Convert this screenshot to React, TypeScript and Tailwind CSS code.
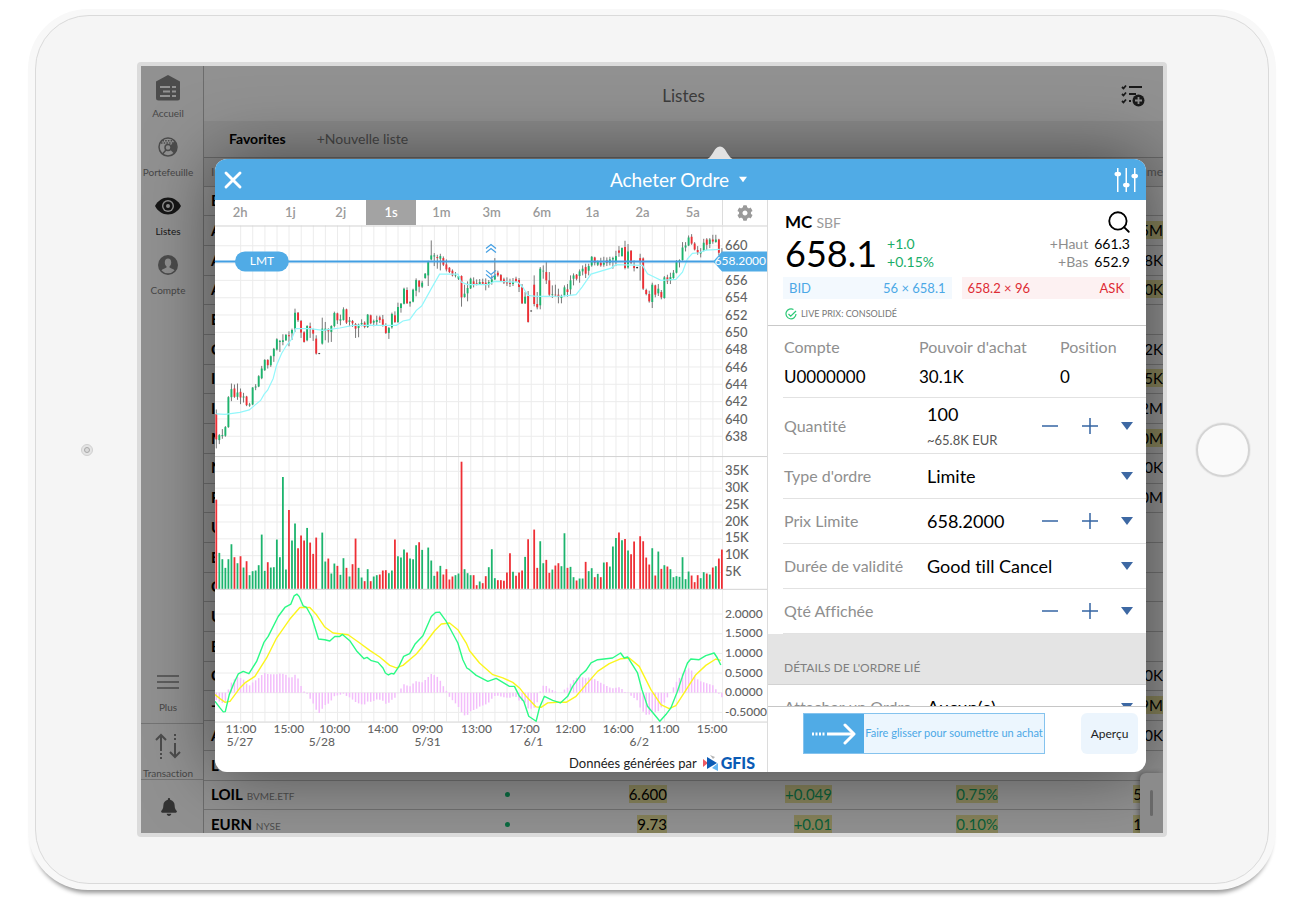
import { Search, X } from "lucide-react"
import { FaBell, FaCog } from "react-icons/fa"

const navItems = [
  { label: "Accueil", icon: <HomeIcon /> },
  { label: "Portefeuille", icon: <PortfolioIcon /> },
  { label: "Listes", icon: <EyeIcon />, active: true },
  { label: "Compte", icon: <AccountIcon /> },
]

const rows = [
  { symbol: "B" },
  { symbol: "A", volume: "1.5M", marked: true },
  { symbol: "A", volume: "8K" },
  { symbol: "A", volume: "10K", marked: true },
  { symbol: "E" },
  { symbol: "C", volume: "2K" },
  { symbol: "I", volume: "5K", marked: true },
  { symbol: "I", volume: "2M" },
  { symbol: "M", volume: "10M", marked: true },
  { symbol: "N", volume: "10K" },
  { symbol: "F", volume: "10M" },
  { symbol: "U" },
  { symbol: "E" },
  { symbol: "C" },
  { symbol: "U" },
  { symbol: "B" },
  { symbol: "C", volume: "10K" },
  { symbol: "-", volume: "9M", marked: true },
  { symbol: "A", volume: "10K" },
  { symbol: "L" },
  { symbol: "LOIL", exchange: "BVME.ETF", price: "6.600", change: "+0.049", pct: "0.75%", volume: "53.5", marked: true },
  { symbol: "EURN", exchange: "NYSE", price: "9.73", change: "+0.01", pct: "0.10%", volume: "12.1", marked: true },
]

const ranges = ["2h", "1j", "2j", "1s", "1m", "3m", "6m", "1a", "2a", "5a"]

// high, body top, body bottom, low (thirds of a pixel below the top of the plot)
const candles = `553,567,643,670 627,630,645,657 612,630,633,641 603,606,632,635 513,516,606,608 475,492,516,528 478,490,515,518
475,502,515,524 490,500,517,537 503,514,517,532 512,514,540,543 533,538,541,545 486,487,538,540 477,484,487,495 450,453,484,486
422,430,459,462 402,404,435,437 402,404,420,430 391,393,420,425 368,371,393,410 339,342,373,376 344,347,350,380 327,345,350,360
326,329,345,347 318,330,333,363 310,314,324,344 250,262,310,320 260,262,285,290 284,287,322,338 318,321,350,352 300,302,345,348
292,303,310,338 310,312,325,347 330,340,385,388 383,384,386,387 277,310,355,358 290,310,316,345 309,311,318,352 300,302,320,350
259,263,302,306 262,264,285,296 268,282,286,300 246,252,284,286 250,252,292,296 275,285,290,303 284,287,294,305 293,296,310,338
295,298,308,336 282,293,297,303 288,292,305,309 266,268,305,308 268,270,294,297 283,287,292,303 271,284,290,300 271,276,284,293
269,282,300,304 294,302,323,326 305,308,323,341 262,266,306,310 258,270,290,293 232,245,290,293 233,235,248,262 187,190,235,237
186,194,234,236 227,230,234,244 190,193,229,231 159,164,196,213 164,166,184,201 166,172,184,188 143,145,158,160 106,110,150,182
45,90,102,105 83,90,93,122 88,95,98,130 85,92,100,135 93,98,118,122 102,117,132,138 125,127,140,143 132,136,150,153
140,150,152,156 148,152,160,164 150,152,216,244 178,205,215,217 168,188,204,228 157,160,189,191 156,168,176,186 162,173,175,180
161,170,176,178 160,170,175,178 159,172,176,195 164,170,177,187 150,162,172,178 98,150,162,164 136,142,150,154 146,149,166,168
157,162,172,176 156,170,174,182 160,172,176,185 158,170,176,182 154,160,168,170 158,164,185,200 176,186,234,236 200,214,234,236
197,210,290,292 255,256,258,259 150,178,236,243 200,236,246,252 125,130,240,252 120,136,138,160 110,140,165,176 140,165,208,212
180,206,208,218 178,208,210,215 190,208,215,234 208,213,218,234 180,186,210,213 176,192,200,214 150,165,192,208 144,150,160,180
146,148,160,165 132,138,152,172 120,130,138,150 115,125,145,158 115,122,136,150 92,94,120,124 94,96,112,120 105,108,118,122
97,112,120,124 94,112,118,124 96,105,112,122 94,102,112,120 94,98,102,130 76,92,110,122 62,75,82,94 66,68,92,94 46,65,128,132
56,78,126,130 74,76,112,116 105,122,128,138 124,125,128,130 85,98,110,166 96,99,190,194 190,194,206,210 196,206,228,232
172,178,230,248 178,180,208,216 176,190,204,212 194,200,216,222 152,156,218,220 148,156,168,176 142,155,165,176 134,142,158,160
104,110,142,144 102,104,106,126 50,66,104,106 50,60,66,78 30,36,60,62 26,34,54,58 50,54,72,75 62,74,82,88 68,80,84,96
40,52,75,78 38,42,58,74 38,42,56,68 28,42,48,55 28,42,50,52 40,42,82,90 68,82,84,100`
  .split(/\s+/)
  .map((c) => c.split(",").map(Number))

// r = down, g = up, k = unchanged, followed by the top of the volume bar
const volumes = `r134 g294 g313 g339 g313 g268 r307 g325 r304 g338 r319 g361 g349 g347 g331 g239 g348 r322 g338 g337 g254 g307
g66 g344 r165 g257 g206 r280 r242 r257 g219 r263 r297 r248 k402 g233 g320 r311 g356 g326 r333 g360 g310 r339 g365 r328 r251 g339
g368 r379 g343 r379 g365 g361 r359 r347 r346 g355 g347 r254 g304 g308 g284 r293 g311 g313 g271 r262 g285 g402 g278 g317 g363
r350 g333 r359 r343 r374 r365 g361 g356 r20 g343 g355 g361 r361 r391 g380 r385 r364 g337 g283 g370 r376 r376 r378 r353 r295
g351 r363 r353 r347 g306 r253 k402 r224 r339 g259 g325 r315 r354 g344 r332 r325 g334 g235 r339 g336 g367 r377 g371 g371 r321
g349 g340 r367 g357 r367 g323 r322 g335 g275 g249 r233 g256 r252 g287 r298 r260 k402 r244 r259 r308 r329 g280 r362 g290 r342
g331 r335 g343 g367 g364 g366 g307 g373 g350 r362 r382 r361 g370 g352 r356 g359 r338 g334 r311 r284`
  .split(/\s+/)
  .map((v) => ({ kind: v[0], top: Number(v.slice(1)) }))

type Point = [number, number]

const place = (points: Point[], x: number, y: number): Point[] => points.map(([px, py]) => [x + px / 3, y + py / 3])

const average = [
  ...place([[19, 566], [45, 568], [90, 562], [118, 554], [135, 540], [152, 526], [163, 507], [173, 495], [190, 460], [200, 420], [215, 385], [230, 360], [245, 342], [258, 310], [300, 310], [340, 315], [390, 308], [430, 300], [560, 300], [580, 287], [600, 283], [620, 255], [636, 242], [665, 190], [690, 146], [745, 146], [755, 170], [775, 178]], 210, 225),
  ...place([[0, 178], [25, 178], [45, 168], [115, 170], [130, 185], [145, 210], [170, 213], [250, 212], [290, 208], [308, 185], [335, 146], [395, 128], [410, 118], [490, 120], [505, 145], [525, 155], [545, 165], [590, 162], [610, 140], [625, 100], [640, 84], [660, 82], [680, 74], [722, 72]], 480, 225),
]

const macd = [
  ...place([[255, 365], [270, 385], [280, 397], [286, 396], [298, 345], [312, 310], [325, 283], [340, 275], [357, 282], [380, 245], [402, 188], [415, 170], [445, 110], [465, 83], [483, 73], [493, 48], [501, 43], [508, 50], [520, 78], [530, 83], [545, 110], [566, 178], [585, 180], [600, 184], [615, 170], [630, 170], [638, 164], [660, 183], [680, 213], [703, 237], [712, 233], [725, 243], [745, 248], [760, 265], [767, 280], [776, 286], [785, 281], [793, 283], [807, 262], [822, 230], [840, 222], [857, 192], [880, 168], [905, 110], [918, 98], [930, 97], [950, 125], [985, 190], [1000, 240], [1012, 265]], 130, 580),
  ...place([[0, 270], [20, 287], [55, 305], [80, 296], [120, 320], [135, 320], [150, 350], [163, 365], [178, 410], [200, 425], [210, 385], [225, 350], [250, 362], [273, 370], [295, 350], [310, 320], [335, 285], [350, 272], [365, 250], [385, 240], [430, 235], [454, 220], [465, 235], [475, 232], [505, 280], [518, 330], [535, 380], [572, 425], [590, 405], [605, 385], [625, 335], [640, 290], [655, 250], [665, 238], [690, 240], [710, 228], [735, 220], [745, 235], [755, 256]], 470, 580),
]

const signal = [
  ...place([[255, 345], [270, 357], [285, 368], [300, 365], [330, 325], [345, 310], [375, 290], [410, 235], [440, 175], [480, 118], [510, 83], [540, 83], [560, 105], [585, 142], [610, 160], [655, 165], [690, 190], [720, 212], [750, 232], [780, 257], [800, 265], [820, 257], [860, 223], [885, 193], [915, 153], [935, 133], [960, 130], [985, 150], [1010, 190]], 130, 580),
  ...place([[0, 213], [30, 250], [70, 285], [100, 295], [130, 308], [150, 325], [170, 350], [200, 382], [215, 383], [235, 370], [265, 368], [290, 368], [320, 350], [350, 315], [385, 275], [420, 252], [455, 237], [480, 235], [510, 260], [545, 330], [575, 375], [600, 387], [620, 378], [645, 340], [680, 285], [710, 257], [740, 238], [755, 242]], 470, 580),
]

const times: [string, number][] = [
  ["11:00", 241], ["15:00", 289], ["10:00", 335], ["14:00", 383], ["09:00", 428], ["13:00", 477],
  ["17:00", 525], ["12:00", 571], ["16:00", 619], ["11:00", 665], ["15:00", 713],
]

const dates: [string, number][] = [["5/27", 240], ["5/28", 322], ["5/31", 428], ["6/1", 534], ["6/2", 640]]

const palette: Record<string, string> = { r: "#ee2f35", g: "#1cb46d", k: "#222222" }

const barX = (i: number) => 216.3 + i * 3.033

const valueAt = (points: Point[], x: number) => {
  const i = points.findIndex((p) => p[0] >= x)
  if (i <= 0) return points[i === 0 ? 0 : points.length - 1][1]
  const [x0, y0] = points[i - 1]
  const [x1, y1] = points[i]
  return y0 + ((x - x0) / (x1 - x0 || 1)) * (y1 - y0)
}

const toPath = (points: Point[]) => points.map((p) => p.map((n) => n.toFixed(1)).join(",")).join(" ")

function HomeIcon() {
  return (
    <svg viewBox="0 0 24 26" className="h-[26px] w-6">
      <path d="M12 0 24 6.500V23a2.500 2.500 0 0 1-2.500 2.500h-19A2.500 2.500 0 0 1 0 23V6.500Z" fill="#4c4c4c" />
      <path d="M4 12h10M7 16.500h7M4 21h10M16 12h4M16 16.500h4M16 21h4" stroke="#929292" strokeWidth="2" />
    </svg>
  )
}

function PortfolioIcon() {
  return (
    <svg viewBox="0 0 20 20" className="size-5" fill="none">
      <circle cx="10" cy="10" r="9" stroke="#4c4c4c" strokeWidth="1.500" />
      <path d="m12.500 8.500 4-4.500a9 9 0 0 1-.5 12.500L12 12.500Z" fill="#4c4c4c" />
      <circle cx="10" cy="10.500" r="3" fill="#8e8e8e" stroke="#4c4c4c" strokeWidth="1.500" />
      <path d="M4.500 3.800h11M3 6h12" stroke="#4c4c4c" strokeWidth="1.500" strokeDasharray="1.500 1.200" />
      <path d="m8 13-3.500 4" stroke="#4c4c4c" strokeWidth="1.500" />
    </svg>
  )
}

function EyeIcon() {
  return (
    <svg viewBox="0 0 26 18" className="h-[18px] w-[26px]">
      <path d="M0 9C3 3.500 7.500.5 13 .5S23 3.500 26 9c-3 5.500-7.500 8.500-13 8.500S3 14.500 0 9Z" fill="#161616" />
      <circle cx="13" cy="9" r="6" fill="#8e8e8e" />
      <circle cx="13" cy="9" r="4.600" fill="#161616" />
      <circle cx="13" cy="9" r="2" fill="#8e8e8e" />
    </svg>
  )
}

function AccountIcon() {
  return (
    <svg viewBox="0 0 20 20" className="size-5">
      <circle cx="10" cy="10" r="10" fill="#4c4c4c" />
      <ellipse cx="10" cy="7.500" rx="3.200" ry="4" fill="#8e8e8e" />
      <path d="M8.500 10h3v2.500c1 1 4 1 5 3a9 9 0 0 1-13 0c1-2 4-2 5-3Z" fill="#8e8e8e" />
    </svg>
  )
}

function Caret({ className }: { className: string }) {
  return (
    <svg viewBox="0 0 12 8" className={className} fill="currentColor" aria-hidden="true">
      <path d="M0 0h12L6 8Z" />
    </svg>
  )
}

function Sidebar() {
  return (
    <nav className="flex w-[63px] shrink-0 flex-col border-r border-[#6c6c6c] pt-2 text-[10px] text-[#474747]">
      <div className="flex flex-col gap-3">
        {navItems.map((item) => (
          <a key={item.label} href="#" className="flex w-[54px] flex-col items-center gap-[3px]">
            <span className="flex h-7 items-center">{item.icon}</span>
            <span className={item.active ? "leading-4 text-[#161616]" : "leading-4"}>{item.label}</span>
          </a>
        ))}
      </div>
      <a href="#" className="mt-auto flex w-[54px] flex-col items-center gap-[3px] pb-2">
        <span className="flex h-7 items-center">
          <svg viewBox="0 0 22 14" className="h-3.5 w-[22px]" stroke="#4c4c4c" strokeWidth="1.500">
            <path d="M0 1h22M0 7h22M0 13h22" />
          </svg>
        </span>
        <span className="leading-4">Plus</span>
      </a>
      <div className="h-14 border-t border-[#747474] pt-2">
        <a href="#" className="flex h-full w-[54px] flex-col items-center justify-between">
          <svg viewBox="0 0 26 26" className="h-7 w-[26px]" stroke="#4c4c4c" strokeWidth="2" fill="none">
            <path d="M6 18V2M1 7l5-5 5 5M20 10v14m-5-5 5 5 5-5" />
            <path d="M6 20v6M20 1v7" strokeDasharray="2 2" />
          </svg>
          <span className="leading-3">Transaction</span>
        </a>
      </div>
      <a href="#" aria-label="Notifications" className="flex h-[54px] items-center justify-center border-t border-[#747474] pr-1.5 text-[#333]">
        <FaBell className="size-[18px]" />
      </a>
    </nav>
  )
}

function Watchlist() {
  return (
    <section className="flex min-w-0 flex-1 flex-col">
      <header className="flex h-[55px] shrink-0 items-center pt-1 pr-[18px]">
        <h1 className="flex-1 pl-[18px] text-center text-[17px] text-[#3c3c3c]">Listes</h1>
        <button aria-label="Ajouter" className="-ml-6">
          <svg viewBox="0 0 24 24" className="size-6" fill="none" stroke="#1a1a1a" strokeWidth="1.800">
            <path d="M8 3h13M8 10h7M8 17h2M1 3l1.500 1.500L5 1.500M1 10l1.500 1.500L5 8.500M1 17l1.500 1.500L5 15.500" />
            <circle cx="17.500" cy="16.500" r="6" fill="#1a1a1a" stroke="none" />
            <path d="M17.500 13v7M14 16.500h7" stroke="#8e8e8e" />
          </svg>
        </button>
      </header>
      <div className="flex h-[37px] shrink-0 items-center gap-[31px] border-b border-[#686868] bg-black/5 px-[25px] text-sm text-[#464646]">
        <button className="font-bold text-black">Favorites</button>
        <button>+Nouvelle liste</button>
      </div>
      <div className="min-h-0 flex-1 overflow-hidden">
        <table className="h-[682px] w-full table-fixed border-collapse text-sm">
          <thead>
            <tr className="h-7 border-b border-[#6f6f6f] bg-[#868686] text-xs text-[#4f4f4f]">
              <th className="pl-[7px] text-left font-normal">Instrument</th>
              <th className="w-3.5" />
              <th className="w-[153px]" />
              <th className="w-[165px]" />
              <th className="w-[166px]" />
              <th className="w-[165px] text-right font-normal">Volume</th>
            </tr>
          </thead>
          <tbody>
            {rows.map((row, i) => (
              <tr key={i} className="border-b border-[#727272] text-[15px]">
                <td className="pl-[7px] whitespace-nowrap">
                  <span className="font-bold text-black">{row.symbol}</span>{" "}
                  <span className="text-[10px] text-[#4e4e4e]">{row.exchange}</span>
                </td>
                <td>{row.price && <span className="mx-auto block size-[5px] rounded-full bg-[#0a6b41]" />}</td>
                <td className="text-right text-black">
                  <span className={row.price && "bg-[#86825a]"}>{row.price}</span>
                </td>
                <td className="text-right text-[#0b5f3a]">
                  <span className={row.price && "bg-[#86825a]"}>{row.change}</span>
                </td>
                <td className="text-right text-[#0b5f3a]">
                  <span className={row.price && "bg-[#86825a]"}>{row.pct}</span>
                </td>
                <td className="text-right text-black">
                  <span className={row.marked ? "bg-[#86825a]" : ""}>{row.volume}</span>
                </td>
              </tr>
            ))}
          </tbody>
        </table>
      </div>
    </section>
  )
}

function Chart() {
  return (
    <svg viewBox="215 225 553 525" className="min-h-0 w-full flex-1" fill="none" role="img" aria-label="MC">
      {/* grid */}
      <g stroke="#ececec">
        {Array.from({ length: 40 }, (_, i) => (
          <path key={i} d={`M${(240.7 + i * 12.13).toFixed(1)} 225V722`} />
        ))}
        {Array.from({ length: 12 }, (_, i) => (
          <path key={i} d={`M215 ${(245.3 + i * 17.35).toFixed(1)}H723`} />
        ))}
        {Array.from({ length: 7 }, (_, i) => (
          <path key={i} d={`M215 ${(471.3 + i * 16.9).toFixed(1)}H723`} />
        ))}
        {Array.from({ length: 6 }, (_, i) => (
          <path key={i} d={`M215 ${(614.3 + i * 19.7).toFixed(1)}H723`} />
        ))}
        <path d="M723.500 225V722" />
      </g>
      <path d="M215 225.500H768M215 456.500H768M215 589.500H768M215 722.500H768" stroke="#d2d2d2" />

      {/* candles */}
      {candles.map(([high, top, bottom, low], i) => {
        const color = palette[volumes[i].kind]
        return (
          <g key={i}>
            <path d={`M${barX(i)} ${225 + high / 3}V${225 + low / 3}`} stroke="#777777" />
            <path d={`M${barX(i)} ${225 + top / 3}V${225 + bottom / 3}`} stroke={color} strokeWidth="1.900" />
          </g>
        )
      })}
      <polyline points={toPath(average)} stroke="#93f7fb" strokeWidth="1.200" />

      {/* volume */}
      {volumes.map((v, i) => (
        <path key={i} d={`M${barX(i)} 589V${455 + v.top / 3}`} stroke={palette[v.kind]} strokeWidth="1.800" />
      ))}

      {/* MACD */}
      {volumes.map((_, i) => (
        <path
          key={i}
          d={`M${barX(i)} 693V${693 - (valueAt(signal, barX(i)) - valueAt(macd, barX(i)))}`}
          stroke="#f3bdfb"
          strokeWidth="1.500"
        />
      ))}
      <polyline points={toPath(signal)} stroke="#fbf51d" strokeWidth="1.400" strokeLinejoin="round" />
      <polyline points={toPath(macd)} stroke="#2bfa86" strokeWidth="1.400" strokeLinejoin="round" />

      {/* limit order line */}
      <path d="M215 261H716" stroke="#439fe3" strokeWidth="2" />
      <rect x="235" y="251" width="54" height="20" rx="10" fill="#50abe6" />
      <text x="262" y="265" fontSize="12" fill="#ffffff" textAnchor="middle">LMT</text>
      <path d="m714 261 9-10h45v20h-45Z" fill="#50abe6" />
      <path d="m486.500 248 5-4 5 4m-10 4 5-4 5 4m-10 18 5 4 5-4m-10 4 5 4 5-4" stroke="#439fe3" strokeWidth="1.200" />

      {/* axes */}
      <g fontSize="13" fontWeight="500" fill="#636363">
        {[660, 658, 656, 654, 652, 650, 648, 646, 644, 642, 640, 638].map((p, i) =>
          p === 658 ? null : (
            <text key={p} x="726" y={250 + i * 17.35}>{p}</text>
          ),
        )}
        {["35K", "30K", "25K", "20K", "15K", "10K", "5K"].map((p, i) => (
          <text key={p} x="726" y={475 + i * 16.9}>{p}</text>
        ))}
        {["2.0000", "1.5000", "1.0000", "0.5000", "0.0000", "-0.5000"].map((p, i) => (
          <text key={p} x="726" y={618 + i * 19.7} fontSize="12">{p}</text>
        ))}
        {times.map(([label, x]) => (
          <text key={x} x={x} y="733" fontSize="12" textAnchor="middle">{label}</text>
        ))}
        {dates.map(([label, x]) => (
          <text key={x} x={x} y="746" fontSize="12" textAnchor="middle">{label}</text>
        ))}
      </g>
      <text x="767" y="265" fontSize="12" fill="#ffffff" textAnchor="end">658.2000</text>
    </svg>
  )
}

function ChartPanel() {
  return (
    <section className="flex min-w-0 flex-1 flex-col border-r border-[#dcdcdc]">
      <div className="flex h-[25px] shrink-0 text-[13px] font-semibold text-[#9a9a9a]">
        <div className="flex flex-1 pr-1">
          {ranges.map((range) => (
            <button key={range} className={range === "1s" ? "flex-1 bg-[#a3a3a3] text-white" : "flex-1"}>
              {range}
            </button>
          ))}
        </div>
        <button aria-label="Paramètres" className="flex w-[45px] items-center justify-center border-l border-[#dcdcdc]">
          <FaCog className="size-4" />
        </button>
      </div>
      <Chart />
      <footer className="flex h-[22px] shrink-0 items-center justify-end gap-1.5 pt-1 pr-3">
        <span className="text-[13px] leading-4 text-[#222]">Données générées par</span>
        <span className="flex items-center gap-0.5 text-base leading-4 font-black text-[#0b5bb5]">
          <svg viewBox="0 0 16 16" className="size-4">
            <path d="M0 4v8l5-4Z" fill="#ec5a63" />
            <path d="m7 0 5 2-2 2Z" fill="#b5b5b5" />
            <path d="M4 2v12l10-6Z" fill="#0b5bb5" />
            <path d="m9 13 6-5v8Z" fill="#64b6f3" />
          </svg>
          GFIS
        </span>
      </footer>
    </section>
  )
}

function Quote() {
  return (
    <div className="h-[126px] shrink-0 border-b border-[#c9c9c9] pt-[9px] pr-4 pl-[17px]">
      <div className="flex items-center justify-between">
        <h2 className="text-[17px] font-bold text-black">
          MC <span className="text-sm font-normal text-[#9b9b9b]">SBF</span>
        </h2>
        <button aria-label="Rechercher" className="-mr-0.5">
          <Search className="size-[26px] text-black" strokeWidth={1.7} />
        </button>
      </div>
      <div className="flex items-center gap-2.5 text-sm leading-[18px]">
        <span className="text-[36px] leading-8 text-black">658.1</span>
        <span className="text-[#19ad68]">
          +1.0
          <br />
          +0.15%
        </span>
        <dl className="ml-auto grid grid-cols-[auto_auto] gap-x-1.5 text-right">
          <dt className="text-[#8d8d8d]">+Haut</dt>
          <dd className="text-black">661.3</dd>
          <dt className="text-[#8d8d8d]">+Bas</dt>
          <dd className="text-black">652.9</dd>
        </dl>
      </div>
      <div className="mt-1.5 -ml-0.5 flex gap-2.5 text-[13px] leading-[22px]">
        <div className="flex flex-1 justify-between bg-[#f3f9fe] px-1.5 text-[#4ba8e6]">
          <span>BID</span>
          <span>56 × 658.1</span>
        </div>
        <div className="flex flex-1 justify-between bg-[#fdf1f2] px-1.5 text-[#dd2c35]">
          <span>658.2 × 96</span>
          <span>ASK</span>
        </div>
      </div>
      <p className="mt-1.5 flex items-center gap-1 text-[9px] leading-[18px] text-[#777]">
        <svg viewBox="0 0 12 12" className="size-3" fill="none" stroke="#2dc877" strokeWidth="1.200">
          <path d="M8.500 1.500A5 5 0 1 0 11 6M3.500 6l2.200 2.200L11 3" />
        </svg>
        LIVE PRIX: CONSOLIDÉ
      </p>
    </div>
  )
}

function Steppers({ label }: { label: string }) {
  return (
    <>
      <button aria-label={`${label} moins`} className="w-4">
        <svg viewBox="0 0 16 16" className="size-4" stroke="#3464a3" strokeWidth="1.500">
          <path d="M0 8h16" />
        </svg>
      </button>
      <button aria-label={`${label} plus`} className="ml-6 w-4">
        <svg viewBox="0 0 16 16" className="size-4" stroke="#3464a3" strokeWidth="1.500">
          <path d="M0 8h16M8 0v16" />
        </svg>
      </button>
      <button aria-label={`${label} options`} className="ml-[23px]">
        <Caret className="h-2 w-3 text-[#3d68a3]" />
      </button>
    </>
  )
}

function NumberRow({ id, label, value, note }: { id: string; label: string; value: string; note?: string }) {
  return (
    <div className={note ? "flex h-14 items-center border-b border-[#e2e2e2] pr-[13px]" : "flex h-[45px] items-center border-b border-[#e2e2e2] pr-[13px]"}>
      <label htmlFor={id} className="w-36 shrink-0 pl-px text-base text-[#8f8f8f]">{label}</label>
      <div className="min-w-0 flex-1">
        <input id={id} defaultValue={value} className="block h-6 w-full text-lg text-black outline-none" />
        {note && <span className="mt-1 block text-[13px] leading-5 text-[#555]">{note}</span>}
      </div>
      <Steppers label={label} />
    </div>
  )
}

function SelectRow({ id, label, value }: { id: string; label: string; value: string }) {
  return (
    <div className="relative flex h-[45px] items-center border-b border-[#e2e2e2] pr-[13px]">
      <label htmlFor={id} className="w-36 shrink-0 pl-px text-base text-[#8f8f8f]">{label}</label>
      <select id={id} className="h-full min-w-0 flex-1 appearance-none bg-transparent text-lg text-black outline-none">
        <option>{value}</option>
      </select>
      <Caret className="pointer-events-none h-2 w-3 text-[#3d68a3]" />
    </div>
  )
}

function OrderForm() {
  return (
    <section className="flex w-[378px] shrink-0 flex-col">
      <Quote />
      <div className="min-h-0 flex-1 overflow-hidden">
        <div className="pl-[15px]">
          <dl className="flex h-[72px] border-b border-[#e2e2e2] pt-2 pl-px text-base leading-[26px] text-[#8f8f8f]">
            <div className="w-[135px]">
              <dt>Compte</dt>
              <dd className="mt-1 text-[17px] text-black">U0000000</dd>
            </div>
            <div className="w-[141px]">
              <dt>Pouvoir d'achat</dt>
              <dd className="mt-1 text-[17px] text-black">30.1K</dd>
            </div>
            <div>
              <dt>Position</dt>
              <dd className="mt-1 text-[17px] text-black">0</dd>
            </div>
          </dl>
          <NumberRow id="quantity" label="Quantité" value="100" note="~65.8K EUR" />
          <SelectRow id="type" label="Type d'ordre" value="Limite" />
          <NumberRow id="limit" label="Prix Limite" value="658.2000" />
          <SelectRow id="validity" label="Durée de validité" value="Good till Cancel" />
          <NumberRow id="display" label="Qté Affichée" value="" />
        </div>
        <h3 className="flex h-[51px] items-end border-b border-[#d2d2d2] bg-[#e4e4e4] pb-2 pl-4 text-xs text-[#7f7f7f]">
          DÉTAILS DE L'ORDRE LIÉ
        </h3>
        <div className="pl-[15px]">
          <SelectRow id="attach" label="Attacher un Ordre" value="Aucun(e)" />
        </div>
      </div>
      <footer className="flex h-[66px] shrink-0 items-start justify-between border-t border-[#c6c6c6] pt-1.5 pr-2 pl-[35px]">
        <button className="flex h-[41px] items-stretch border border-[#85c3ee] bg-[#ecf6fe] text-[11px] text-[#4ba8e6]">
          <span className="flex w-[60px] items-center justify-center bg-[#50abe6]">
            <svg viewBox="0 0 44 22" className="h-[22px] w-11" fill="none" stroke="#ffffff" strokeWidth="3">
              <path d="M0 11h14" strokeDasharray="2 1.500" />
              <path d="M15 11h27" />
              <path d="m33 2 9 9-9 9" strokeLinecap="round" strokeLinejoin="round" />
            </svg>
          </span>
          <span className="flex w-[180px] items-center justify-center whitespace-nowrap">Faire glisser pour soumettre un achat</span>
        </button>
        <button className="h-[41px] w-[57px] rounded-md bg-[#ecf5fd] text-xs text-[#222]">Aperçu</button>
      </footer>
    </section>
  )
}

function OrderDialog() {
  return (
    <div role="dialog" aria-label="Acheter Ordre" className="absolute top-[93px] right-[17px] bottom-[61px] left-[74px] rounded-xl shadow-[0_0_70px_rgba(0,0,0,0.5)]">
      <svg viewBox="0 0 30 14" className="absolute -top-[13px] left-[490px] h-3.5 w-[30px]" fill="#e2e2e2">
        <path d="M0 14c5-1 7-6 10-10.500C13-.5 17-.5 20 3.500 23 8 25 13 30 14Z" />
      </svg>
      <div className="relative flex h-full flex-col overflow-hidden rounded-xl bg-white">
        <header className="flex h-[41px] shrink-0 items-center justify-between bg-[#50abe6] px-2 text-white">
          <button aria-label="Fermer">
            <X className="-mx-1 size-7" strokeWidth={2.5} />
          </button>
          <button className="flex items-center gap-2.5 text-[19px] leading-6">
            Acheter Ordre
            <Caret className="h-[7px] w-2" />
          </button>
          <button aria-label="Réglages">
            <svg viewBox="0 0 24 24" className="size-6" fill="#ffffff">
              <path d="M3 0h1.500v24H3ZM11.500 0H13v24h-1.500ZM20 0h1.500v24H20Z" />
              <ellipse cx="3.800" cy="6" rx="3.300" ry="2.300" />
              <ellipse cx="12.300" cy="17" rx="3.300" ry="2.300" />
              <ellipse cx="20.700" cy="8" rx="3.300" ry="2.300" />
            </svg>
          </button>
        </header>
        <div className="flex min-h-0 flex-1">
          <ChartPanel />
          <OrderForm />
        </div>
      </div>
    </div>
  )
}

export default function App() {
  return (
    <main className="flex h-screen min-h-[780px] flex-col bg-white pt-[9px] pr-6 pb-2.5 pl-7 font-[Lato,'Liberation_Sans',sans-serif] [font-variant-ligatures:none]">
      <div className="flex min-h-0 flex-1 rounded-[60px] bg-[#f8f8f8] px-[7px] py-1.5 shadow-[0_7px_4px_-4px_rgba(0,0,0,0.4)]">
        <div className="flex min-w-0 flex-1 rounded-[54px] border border-[#dadada] bg-[#f5f5f5] pt-[46px] pb-[46px]">
          <div className="flex w-[101px] shrink-0 items-center justify-center">
            <span className="flex size-3 items-center justify-center rounded-full border border-[#d0d0d0] bg-[#e4e4e4]">
              <span className="size-1.5 rounded-full border border-[#a8a8a8] bg-[#dadada]" />
            </span>
          </div>
          <div className="flex min-w-0 flex-1 rounded border-4 border-[#dbdbdb]">
            <div className="relative flex min-w-0 flex-1 overflow-hidden bg-[#919191]">
              <Sidebar />
              <Watchlist />
              <OrderDialog />
              <div className="absolute right-0 bottom-0 flex h-[60px] w-[23px] items-center justify-center rounded-tl-md bg-[#8b8b8b] shadow-[-2px_0_5px_rgba(0,0,0,0.3)]">
                <span className="h-[26px] w-[3px] rounded bg-[#686868]" />
              </div>
            </div>
          </div>
          <div className="flex w-[101px] shrink-0 items-center justify-end pr-[18px]">
            <button aria-label="Accueil de la tablette" className="size-[54px] rounded-full border-2 border-[#d4d4d4] bg-[#fafafa] shadow-[0_0_0_1px_#ececec]" />
          </div>
        </div>
      </div>
    </main>
  )
}
